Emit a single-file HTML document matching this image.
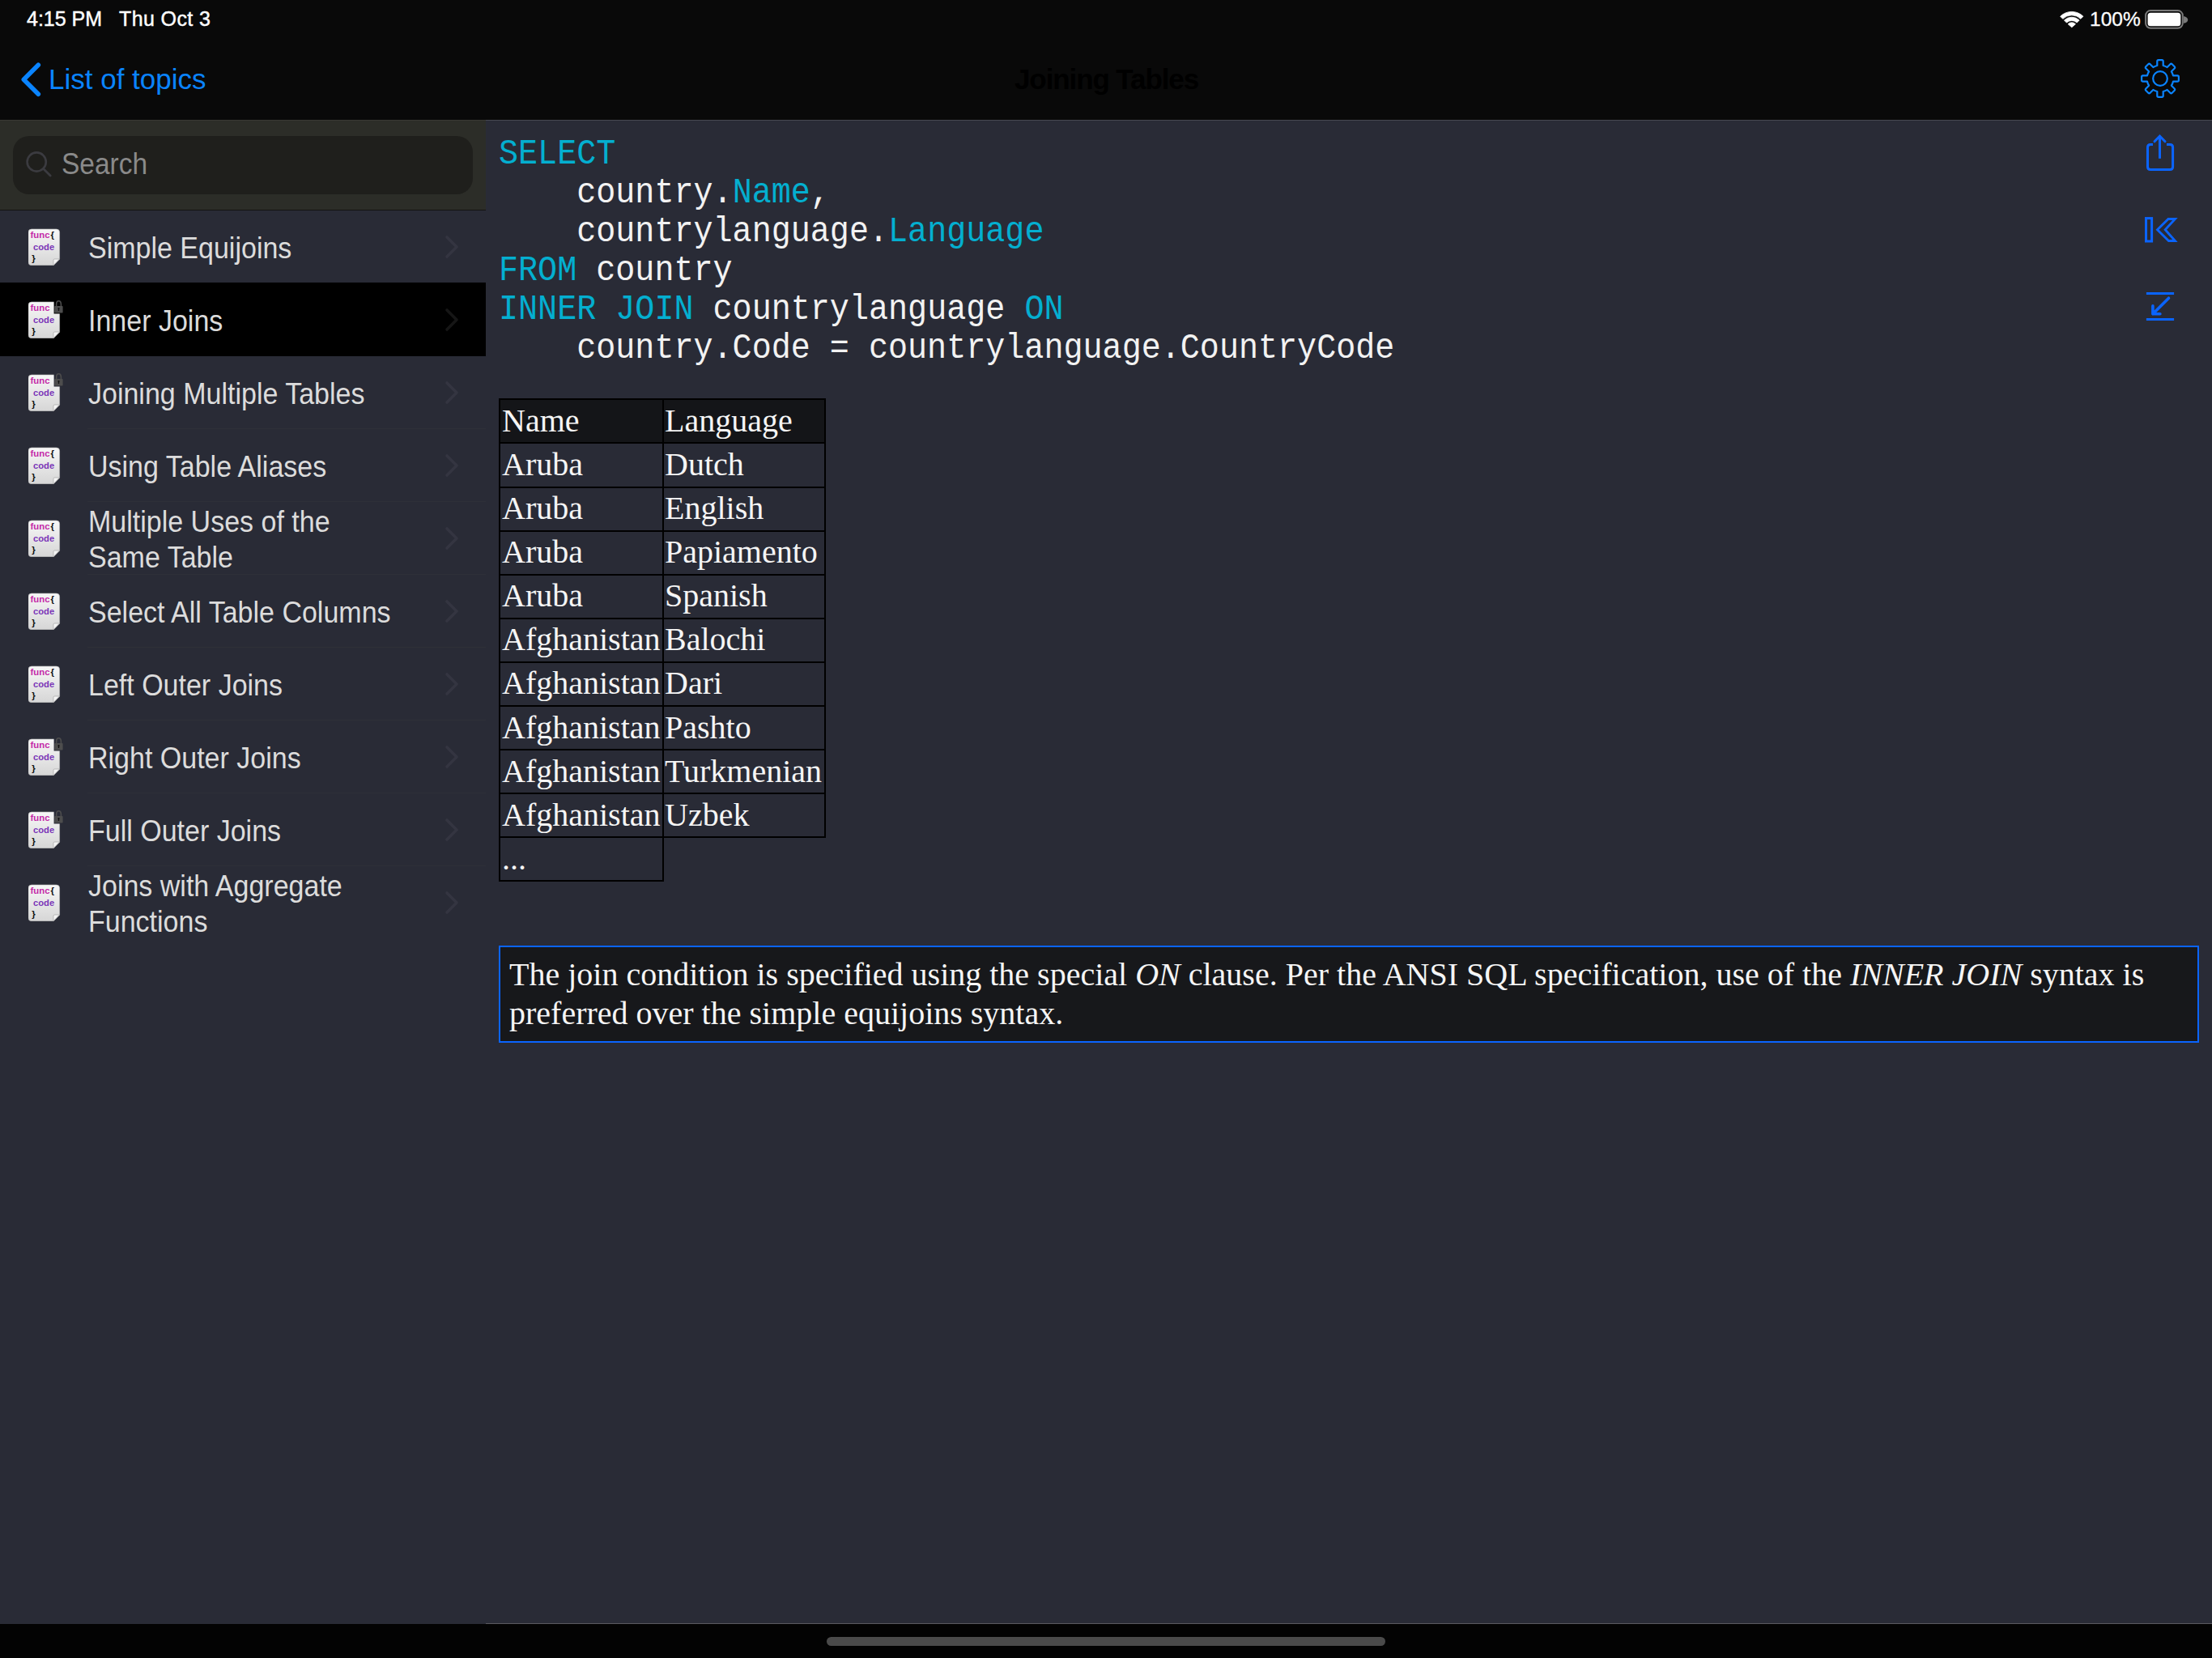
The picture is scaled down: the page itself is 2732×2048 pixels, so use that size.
<!DOCTYPE html>
<html><head><meta charset="utf-8">
<style>
*{margin:0;padding:0;box-sizing:border-box}
html,body{width:2732px;height:2048px;overflow:hidden;background:#292b36}
body{position:relative;font-family:"Liberation Sans",sans-serif}
.a{position:absolute;white-space:pre}
#top{position:absolute;left:0;top:0;width:2732px;height:148px;background:#090909}
#navsep{position:absolute;left:600px;top:148px;width:2132px;height:1px;background:#474852}
#navsep2{position:absolute;left:0;top:148px;width:600px;height:1px;background:#393934;z-index:2}
#searchband{position:absolute;left:0;top:148px;width:600px;height:112px;background:#2c2d28;border-bottom:1px solid #141412}
#field{position:absolute;left:16px;top:168px;width:568px;height:72px;border-radius:20px;background:#1f1f1c}
.sel{position:absolute;left:0;width:600px;background:#000}
.sep{position:absolute;left:108px;width:492px;height:1px;background:#2e3038}
.title{position:absolute;left:109px;font-size:34px;line-height:44.8px;color:#dcdcdc;white-space:pre}
.code{position:absolute;left:616px;font-family:"Liberation Mono",monospace;font-size:40.1px;line-height:48px;color:#f2f2f2;white-space:pre}
.k{color:#04afd0}
#bottom{position:absolute;left:0;top:2006px;width:2732px;height:42px;background:#030303}
#botsep{position:absolute;left:600px;top:2005px;width:2132px;height:1px;background:#5a5a60}
#home{position:absolute;left:1021px;top:2022px;width:690px;height:11px;border-radius:6px;background:#4a4a4a}
.serif{position:absolute;font-family:"Liberation Serif",serif;color:#f5f5f5;font-size:40px;white-space:pre}
.tl{position:absolute;background:#000}
#box{position:absolute;left:616px;top:1168px;width:2100px;height:120px;border:2px solid #0a64ff;background:#17181b}
</style></head><body>
<div id="top"></div>
<div id="navsep"></div>
<div class="a" style="left:33px;top:6px;font-size:25px;line-height:34px;color:#fff;-webkit-text-stroke:0.45px #fff">4:15 PM</div>
<div class="a" style="left:147px;top:6px;font-size:25px;line-height:34px;color:#fff;-webkit-text-stroke:0.45px #fff;letter-spacing:0.4px">Thu Oct 3</div>
<div class="a" style="left:2581px;top:7px;font-size:24.5px;line-height:34px;color:#fff;-webkit-text-stroke:0.3px #fff">100%</div>
<div class="a" style="left:60px;top:80px;font-size:35px;line-height:35px;color:#0a84ff">List of topics</div>
<div class="a" style="left:1253px;top:80px;font-size:35px;line-height:35px;color:#000;font-weight:bold;letter-spacing:-1.1px">Joining Tables</div>
<svg class="a" style="left:0;top:0" width="2732" height="148">
 <path d="M47.3 80.2L29.3 98.2L47.3 116.2" fill="none" stroke="#0a84ff" stroke-width="5.6" stroke-linecap="round" stroke-linejoin="round"/>
 <path d="M2544.66 20.26A20.0 20.0 0 0 1 2572.94 20.26L2569.83 23.37A15.6 15.6 0 0 0 2547.77 23.37Z" fill="#fff" stroke="#fff" stroke-width="0.8" stroke-linejoin="round"/><path d="M2549.47 25.07A13.2 13.2 0 0 1 2568.13 25.07L2565.16 28.04A9.0 9.0 0 0 0 2552.44 28.04Z" fill="#fff" stroke="#fff" stroke-width="0.8" stroke-linejoin="round"/><path d="M2554.13 29.73A6.6 6.6 0 0 1 2563.47 29.73L2558.8 33.8Z" fill="#fff" stroke="#fff" stroke-width="0.8" stroke-linejoin="round"/>
 <rect x="2650.1" y="13.1" width="45.7" height="21.6" rx="6" fill="none" stroke="#7a7a7a" stroke-width="2"/>
 <rect x="2652.6" y="15.8" width="40.7" height="16.5" rx="3.5" fill="#fff"/>
 <path d="M2697 20V28.8Q2702.2 27.5 2702.2 24.4Q2702.2 21.3 2697 20Z" fill="#7a7a7a"/>
 <path d="M2664.30 81.02L2664.30 75.70Q2664.30 74.10 2665.90 74.10L2670.10 74.10Q2671.70 74.10 2671.70 75.70L2671.70 81.02A16.4 16.4 0 0 1 2676.68 83.09L2680.45 79.32Q2681.58 78.19 2682.71 79.32L2685.68 82.29Q2686.81 83.42 2685.68 84.55L2681.91 88.32A16.4 16.4 0 0 1 2683.98 93.30L2689.30 93.30Q2690.90 93.30 2690.90 94.90L2690.90 99.10Q2690.90 100.70 2689.30 100.70L2683.98 100.70A16.4 16.4 0 0 1 2681.91 105.68L2685.68 109.45Q2686.81 110.58 2685.68 111.71L2682.71 114.68Q2681.58 115.81 2680.45 114.68L2676.68 110.91A16.4 16.4 0 0 1 2671.70 112.98L2671.70 118.30Q2671.70 119.90 2670.10 119.90L2665.90 119.90Q2664.30 119.90 2664.30 118.30L2664.30 112.98A16.4 16.4 0 0 1 2659.32 110.91L2655.55 114.68Q2654.42 115.81 2653.29 114.68L2650.32 111.71Q2649.19 110.58 2650.32 109.45L2654.09 105.68A16.4 16.4 0 0 1 2652.02 100.70L2646.70 100.70Q2645.10 100.70 2645.10 99.10L2645.10 94.90Q2645.10 93.30 2646.70 93.30L2652.02 93.30A16.4 16.4 0 0 1 2654.09 88.32L2650.32 84.55Q2649.19 83.42 2650.32 82.29L2653.29 79.32Q2654.42 78.19 2655.55 79.32L2659.32 83.09A16.4 16.4 0 0 1 2664.30 81.02Z" fill="none" stroke="#0a84ff" stroke-width="2.2" stroke-linejoin="round"/><circle cx="2668" cy="97" r="8.85" fill="none" stroke="#0a84ff" stroke-width="2.2"/>
</svg>
<div id="searchband"></div><div id="navsep2"></div>
<div id="field"></div>
<svg class="a" style="left:0;top:150px" width="100" height="100">
 <circle cx="45.2" cy="50" r="11.6" fill="none" stroke="#3b3b40" stroke-width="2.6"/>
 <path d="M53.6 58.4L62.2 67" stroke="#3b3b40" stroke-width="2.8" stroke-linecap="round"/>
</svg>
<div class="a" style="left:76px;top:187.3px;font-size:33.5px;line-height:34px;color:#8a8a8a;transform:scaleY(1.08);transform-origin:0 28.6px">Search</div>
<div class="title" style="top:284.90px;transform:scaleY(1.06);transform-origin:0 33.7px">Simple Equijoins</div><svg class="a" style="left:35.20px;top:280.20px" width="46" height="48" viewBox="0 -3 46 48"><defs><linearGradient id="g" x1="0" y1="0" x2="0" y2="1"><stop offset="0" stop-color="#f7f7f7"/><stop offset="1" stop-color="#d6d6d6"/></linearGradient></defs><path d="M4 0H34.6Q38.6 0 38.6 4V37L31 44.7H4Q0 44.7 0 40.7V4Q0 0 4 0Z" fill="url(#g)" stroke="#b8b8b8" stroke-width="0.6"/><path d="M38.6 37L31 44.7V38.5Q31 37 32.5 37Z" fill="#f4f4f4" stroke="#9a9a9a" stroke-width="0.6"/><text x="2.6" y="10.7" font-family="Liberation Sans" font-weight="bold" font-size="11.3" fill="#c42aa8">func</text><text x="27.6" y="11.2" font-family="Liberation Sans" font-weight="bold" font-size="11.5" fill="#111">{</text><text x="6" y="25.5" font-family="Liberation Sans" font-weight="bold" font-size="11.2" fill="#7b36b8">code</text><text x="4.2" y="40.4" font-family="Liberation Sans" font-weight="bold" font-size="11.5" fill="#111">}</text></svg><svg class="a" style="left:545px;top:288.50px" width="26" height="32"><path d="M7 4L19 16L7 28" fill="none" stroke="#343541" stroke-width="3.6" stroke-linecap="round" stroke-linejoin="round"/></svg><div class="sel" style="top:349.00px;height:91px"></div><div class="title" style="top:374.90px;transform:scaleY(1.06);transform-origin:0 33.7px">Inner Joins</div><svg class="a" style="left:35.20px;top:370.20px" width="46" height="48" viewBox="0 -3 46 48"><defs><linearGradient id="g" x1="0" y1="0" x2="0" y2="1"><stop offset="0" stop-color="#f7f7f7"/><stop offset="1" stop-color="#d6d6d6"/></linearGradient></defs><path d="M4 0H34.6Q38.6 0 38.6 4V37L31 44.7H4Q0 44.7 0 40.7V4Q0 0 4 0Z" fill="url(#g)" stroke="#b8b8b8" stroke-width="0.6"/><path d="M38.6 37L31 44.7V38.5Q31 37 32.5 37Z" fill="#f4f4f4" stroke="#9a9a9a" stroke-width="0.6"/><rect x="31.6" y="-3" width="14.4" height="17.5" fill="#000"/><path d="M34.6 5.5V3.2Q34.6 -1.2 37.5 -1.2Q40.4 -1.2 40.4 3.2V5.5" fill="none" stroke="#4d4d4d" stroke-width="1.6"/><rect x="32.3" y="5" width="10.3" height="8.5" rx="0.8" fill="#4d4d4d"/><path d="M37.5 7.6V11" stroke="#111" stroke-width="1.3"/><circle cx="37.5" cy="8" r="1" fill="#111"/><text x="2.6" y="10.7" font-family="Liberation Sans" font-weight="bold" font-size="11.3" fill="#c42aa8">func</text><text x="6" y="25.5" font-family="Liberation Sans" font-weight="bold" font-size="11.2" fill="#7b36b8">code</text><text x="4.2" y="40.4" font-family="Liberation Sans" font-weight="bold" font-size="11.5" fill="#111">}</text></svg><svg class="a" style="left:545px;top:378.50px" width="26" height="32"><path d="M7 4L19 16L7 28" fill="none" stroke="#161616" stroke-width="3.6" stroke-linecap="round" stroke-linejoin="round"/></svg><div class="title" style="top:464.90px;transform:scaleY(1.06);transform-origin:0 33.7px">Joining Multiple Tables</div><svg class="a" style="left:35.20px;top:460.20px" width="46" height="48" viewBox="0 -3 46 48"><defs><linearGradient id="g" x1="0" y1="0" x2="0" y2="1"><stop offset="0" stop-color="#f7f7f7"/><stop offset="1" stop-color="#d6d6d6"/></linearGradient></defs><path d="M4 0H34.6Q38.6 0 38.6 4V37L31 44.7H4Q0 44.7 0 40.7V4Q0 0 4 0Z" fill="url(#g)" stroke="#b8b8b8" stroke-width="0.6"/><path d="M38.6 37L31 44.7V38.5Q31 37 32.5 37Z" fill="#f4f4f4" stroke="#9a9a9a" stroke-width="0.6"/><rect x="31.6" y="-3" width="14.4" height="17.5" fill="#292b36"/><path d="M34.6 5.5V3.2Q34.6 -1.2 37.5 -1.2Q40.4 -1.2 40.4 3.2V5.5" fill="none" stroke="#4d4d4d" stroke-width="1.6"/><rect x="32.3" y="5" width="10.3" height="8.5" rx="0.8" fill="#4d4d4d"/><path d="M37.5 7.6V11" stroke="#111" stroke-width="1.3"/><circle cx="37.5" cy="8" r="1" fill="#111"/><text x="2.6" y="10.7" font-family="Liberation Sans" font-weight="bold" font-size="11.3" fill="#c42aa8">func</text><text x="6" y="25.5" font-family="Liberation Sans" font-weight="bold" font-size="11.2" fill="#7b36b8">code</text><text x="4.2" y="40.4" font-family="Liberation Sans" font-weight="bold" font-size="11.5" fill="#111">}</text></svg><svg class="a" style="left:545px;top:468.50px" width="26" height="32"><path d="M7 4L19 16L7 28" fill="none" stroke="#343541" stroke-width="3.6" stroke-linecap="round" stroke-linejoin="round"/></svg><div class="sep" style="top:529.00px"></div><div class="title" style="top:554.90px;transform:scaleY(1.06);transform-origin:0 33.7px">Using Table Aliases</div><svg class="a" style="left:35.20px;top:550.20px" width="46" height="48" viewBox="0 -3 46 48"><defs><linearGradient id="g" x1="0" y1="0" x2="0" y2="1"><stop offset="0" stop-color="#f7f7f7"/><stop offset="1" stop-color="#d6d6d6"/></linearGradient></defs><path d="M4 0H34.6Q38.6 0 38.6 4V37L31 44.7H4Q0 44.7 0 40.7V4Q0 0 4 0Z" fill="url(#g)" stroke="#b8b8b8" stroke-width="0.6"/><path d="M38.6 37L31 44.7V38.5Q31 37 32.5 37Z" fill="#f4f4f4" stroke="#9a9a9a" stroke-width="0.6"/><text x="2.6" y="10.7" font-family="Liberation Sans" font-weight="bold" font-size="11.3" fill="#c42aa8">func</text><text x="27.6" y="11.2" font-family="Liberation Sans" font-weight="bold" font-size="11.5" fill="#111">{</text><text x="6" y="25.5" font-family="Liberation Sans" font-weight="bold" font-size="11.2" fill="#7b36b8">code</text><text x="4.2" y="40.4" font-family="Liberation Sans" font-weight="bold" font-size="11.5" fill="#111">}</text></svg><svg class="a" style="left:545px;top:558.50px" width="26" height="32"><path d="M7 4L19 16L7 28" fill="none" stroke="#343541" stroke-width="3.6" stroke-linecap="round" stroke-linejoin="round"/></svg><div class="sep" style="top:619.00px"></div><div class="title" style="top:622.60px;transform:scaleY(1.06);transform-origin:0 33.7px">Multiple Uses of the</div><div class="title" style="top:666.80px;transform:scaleY(1.06);transform-origin:0 33.7px">Same Table</div><svg class="a" style="left:35.20px;top:640.20px" width="46" height="48" viewBox="0 -3 46 48"><defs><linearGradient id="g" x1="0" y1="0" x2="0" y2="1"><stop offset="0" stop-color="#f7f7f7"/><stop offset="1" stop-color="#d6d6d6"/></linearGradient></defs><path d="M4 0H34.6Q38.6 0 38.6 4V37L31 44.7H4Q0 44.7 0 40.7V4Q0 0 4 0Z" fill="url(#g)" stroke="#b8b8b8" stroke-width="0.6"/><path d="M38.6 37L31 44.7V38.5Q31 37 32.5 37Z" fill="#f4f4f4" stroke="#9a9a9a" stroke-width="0.6"/><text x="2.6" y="10.7" font-family="Liberation Sans" font-weight="bold" font-size="11.3" fill="#c42aa8">func</text><text x="27.6" y="11.2" font-family="Liberation Sans" font-weight="bold" font-size="11.5" fill="#111">{</text><text x="6" y="25.5" font-family="Liberation Sans" font-weight="bold" font-size="11.2" fill="#7b36b8">code</text><text x="4.2" y="40.4" font-family="Liberation Sans" font-weight="bold" font-size="11.5" fill="#111">}</text></svg><svg class="a" style="left:545px;top:648.50px" width="26" height="32"><path d="M7 4L19 16L7 28" fill="none" stroke="#343541" stroke-width="3.6" stroke-linecap="round" stroke-linejoin="round"/></svg><div class="sep" style="top:709.00px"></div><div class="title" style="top:734.90px;transform:scaleY(1.06);transform-origin:0 33.7px">Select All Table Columns</div><svg class="a" style="left:35.20px;top:730.20px" width="46" height="48" viewBox="0 -3 46 48"><defs><linearGradient id="g" x1="0" y1="0" x2="0" y2="1"><stop offset="0" stop-color="#f7f7f7"/><stop offset="1" stop-color="#d6d6d6"/></linearGradient></defs><path d="M4 0H34.6Q38.6 0 38.6 4V37L31 44.7H4Q0 44.7 0 40.7V4Q0 0 4 0Z" fill="url(#g)" stroke="#b8b8b8" stroke-width="0.6"/><path d="M38.6 37L31 44.7V38.5Q31 37 32.5 37Z" fill="#f4f4f4" stroke="#9a9a9a" stroke-width="0.6"/><text x="2.6" y="10.7" font-family="Liberation Sans" font-weight="bold" font-size="11.3" fill="#c42aa8">func</text><text x="27.6" y="11.2" font-family="Liberation Sans" font-weight="bold" font-size="11.5" fill="#111">{</text><text x="6" y="25.5" font-family="Liberation Sans" font-weight="bold" font-size="11.2" fill="#7b36b8">code</text><text x="4.2" y="40.4" font-family="Liberation Sans" font-weight="bold" font-size="11.5" fill="#111">}</text></svg><svg class="a" style="left:545px;top:738.50px" width="26" height="32"><path d="M7 4L19 16L7 28" fill="none" stroke="#343541" stroke-width="3.6" stroke-linecap="round" stroke-linejoin="round"/></svg><div class="sep" style="top:799.00px"></div><div class="title" style="top:824.90px;transform:scaleY(1.06);transform-origin:0 33.7px">Left Outer Joins</div><svg class="a" style="left:35.20px;top:820.20px" width="46" height="48" viewBox="0 -3 46 48"><defs><linearGradient id="g" x1="0" y1="0" x2="0" y2="1"><stop offset="0" stop-color="#f7f7f7"/><stop offset="1" stop-color="#d6d6d6"/></linearGradient></defs><path d="M4 0H34.6Q38.6 0 38.6 4V37L31 44.7H4Q0 44.7 0 40.7V4Q0 0 4 0Z" fill="url(#g)" stroke="#b8b8b8" stroke-width="0.6"/><path d="M38.6 37L31 44.7V38.5Q31 37 32.5 37Z" fill="#f4f4f4" stroke="#9a9a9a" stroke-width="0.6"/><text x="2.6" y="10.7" font-family="Liberation Sans" font-weight="bold" font-size="11.3" fill="#c42aa8">func</text><text x="27.6" y="11.2" font-family="Liberation Sans" font-weight="bold" font-size="11.5" fill="#111">{</text><text x="6" y="25.5" font-family="Liberation Sans" font-weight="bold" font-size="11.2" fill="#7b36b8">code</text><text x="4.2" y="40.4" font-family="Liberation Sans" font-weight="bold" font-size="11.5" fill="#111">}</text></svg><svg class="a" style="left:545px;top:828.50px" width="26" height="32"><path d="M7 4L19 16L7 28" fill="none" stroke="#343541" stroke-width="3.6" stroke-linecap="round" stroke-linejoin="round"/></svg><div class="sep" style="top:889.00px"></div><div class="title" style="top:914.90px;transform:scaleY(1.06);transform-origin:0 33.7px">Right Outer Joins</div><svg class="a" style="left:35.20px;top:910.20px" width="46" height="48" viewBox="0 -3 46 48"><defs><linearGradient id="g" x1="0" y1="0" x2="0" y2="1"><stop offset="0" stop-color="#f7f7f7"/><stop offset="1" stop-color="#d6d6d6"/></linearGradient></defs><path d="M4 0H34.6Q38.6 0 38.6 4V37L31 44.7H4Q0 44.7 0 40.7V4Q0 0 4 0Z" fill="url(#g)" stroke="#b8b8b8" stroke-width="0.6"/><path d="M38.6 37L31 44.7V38.5Q31 37 32.5 37Z" fill="#f4f4f4" stroke="#9a9a9a" stroke-width="0.6"/><rect x="31.6" y="-3" width="14.4" height="17.5" fill="#292b36"/><path d="M34.6 5.5V3.2Q34.6 -1.2 37.5 -1.2Q40.4 -1.2 40.4 3.2V5.5" fill="none" stroke="#4d4d4d" stroke-width="1.6"/><rect x="32.3" y="5" width="10.3" height="8.5" rx="0.8" fill="#4d4d4d"/><path d="M37.5 7.6V11" stroke="#111" stroke-width="1.3"/><circle cx="37.5" cy="8" r="1" fill="#111"/><text x="2.6" y="10.7" font-family="Liberation Sans" font-weight="bold" font-size="11.3" fill="#c42aa8">func</text><text x="6" y="25.5" font-family="Liberation Sans" font-weight="bold" font-size="11.2" fill="#7b36b8">code</text><text x="4.2" y="40.4" font-family="Liberation Sans" font-weight="bold" font-size="11.5" fill="#111">}</text></svg><svg class="a" style="left:545px;top:918.50px" width="26" height="32"><path d="M7 4L19 16L7 28" fill="none" stroke="#343541" stroke-width="3.6" stroke-linecap="round" stroke-linejoin="round"/></svg><div class="sep" style="top:979.00px"></div><div class="title" style="top:1004.90px;transform:scaleY(1.06);transform-origin:0 33.7px">Full Outer Joins</div><svg class="a" style="left:35.20px;top:1000.20px" width="46" height="48" viewBox="0 -3 46 48"><defs><linearGradient id="g" x1="0" y1="0" x2="0" y2="1"><stop offset="0" stop-color="#f7f7f7"/><stop offset="1" stop-color="#d6d6d6"/></linearGradient></defs><path d="M4 0H34.6Q38.6 0 38.6 4V37L31 44.7H4Q0 44.7 0 40.7V4Q0 0 4 0Z" fill="url(#g)" stroke="#b8b8b8" stroke-width="0.6"/><path d="M38.6 37L31 44.7V38.5Q31 37 32.5 37Z" fill="#f4f4f4" stroke="#9a9a9a" stroke-width="0.6"/><rect x="31.6" y="-3" width="14.4" height="17.5" fill="#292b36"/><path d="M34.6 5.5V3.2Q34.6 -1.2 37.5 -1.2Q40.4 -1.2 40.4 3.2V5.5" fill="none" stroke="#4d4d4d" stroke-width="1.6"/><rect x="32.3" y="5" width="10.3" height="8.5" rx="0.8" fill="#4d4d4d"/><path d="M37.5 7.6V11" stroke="#111" stroke-width="1.3"/><circle cx="37.5" cy="8" r="1" fill="#111"/><text x="2.6" y="10.7" font-family="Liberation Sans" font-weight="bold" font-size="11.3" fill="#c42aa8">func</text><text x="6" y="25.5" font-family="Liberation Sans" font-weight="bold" font-size="11.2" fill="#7b36b8">code</text><text x="4.2" y="40.4" font-family="Liberation Sans" font-weight="bold" font-size="11.5" fill="#111">}</text></svg><svg class="a" style="left:545px;top:1008.50px" width="26" height="32"><path d="M7 4L19 16L7 28" fill="none" stroke="#343541" stroke-width="3.6" stroke-linecap="round" stroke-linejoin="round"/></svg><div class="sep" style="top:1069.00px"></div><div class="title" style="top:1072.60px;transform:scaleY(1.06);transform-origin:0 33.7px">Joins with Aggregate</div><div class="title" style="top:1116.80px;transform:scaleY(1.06);transform-origin:0 33.7px">Functions</div><svg class="a" style="left:35.20px;top:1090.20px" width="46" height="48" viewBox="0 -3 46 48"><defs><linearGradient id="g" x1="0" y1="0" x2="0" y2="1"><stop offset="0" stop-color="#f7f7f7"/><stop offset="1" stop-color="#d6d6d6"/></linearGradient></defs><path d="M4 0H34.6Q38.6 0 38.6 4V37L31 44.7H4Q0 44.7 0 40.7V4Q0 0 4 0Z" fill="url(#g)" stroke="#b8b8b8" stroke-width="0.6"/><path d="M38.6 37L31 44.7V38.5Q31 37 32.5 37Z" fill="#f4f4f4" stroke="#9a9a9a" stroke-width="0.6"/><text x="2.6" y="10.7" font-family="Liberation Sans" font-weight="bold" font-size="11.3" fill="#c42aa8">func</text><text x="27.6" y="11.2" font-family="Liberation Sans" font-weight="bold" font-size="11.5" fill="#111">{</text><text x="6" y="25.5" font-family="Liberation Sans" font-weight="bold" font-size="11.2" fill="#7b36b8">code</text><text x="4.2" y="40.4" font-family="Liberation Sans" font-weight="bold" font-size="11.5" fill="#111">}</text></svg><svg class="a" style="left:545px;top:1098.50px" width="26" height="32"><path d="M7 4L19 16L7 28" fill="none" stroke="#343541" stroke-width="3.6" stroke-linecap="round" stroke-linejoin="round"/></svg><div class="code" style="top:168px;transform:scaleY(1.1);transform-origin:0 34.7px"><span class="k">SELECT</span></div><div class="code" style="top:216px;transform:scaleY(1.1);transform-origin:0 34.7px">    country.<span class="k">Name</span>,</div><div class="code" style="top:264px;transform:scaleY(1.1);transform-origin:0 34.7px">    countrylanguage.<span class="k">Language</span></div><div class="code" style="top:312px;transform:scaleY(1.1);transform-origin:0 34.7px"><span class="k">FROM</span> country</div><div class="code" style="top:360px;transform:scaleY(1.1);transform-origin:0 34.7px"><span class="k">INNER JOIN</span> countrylanguage <span class="k">ON</span></div><div class="code" style="top:408px;transform:scaleY(1.1);transform-origin:0 34.7px">    country.Code = countrylanguage.CountryCode</div><svg class="a" style="left:2600px;top:150px" width="132" height="260">
 <g fill="none" stroke="#0a64ff" stroke-width="3">
  <path d="M59 28.5H56Q52.5 28.5 52.5 32V56Q52.5 59.5 56 59.5H80.1Q83.6 59.5 83.6 56V32Q83.6 28.5 80.1 28.5H76" />
  <path d="M67.5 18.5V45.8" stroke-width="3"/>
  <path d="M61 24.8L67.5 18.2L74 24.8" stroke-linecap="round"/>
  <rect x="50.5" y="119.6" width="7.1" height="28.4" stroke-width="3"/>
  <path d="M78 120.5H86.5L74.2 133.8L86.5 147.5H78.5L64.5 133.8Z" stroke-width="2.8"/>
  <path d="M50.9 212.5H85.1M50.9 244.5H85.1" stroke-width="3"/>
  <path d="M78.5 218.2L58.9 237.8M58.9 227.9V237.8H67.9" stroke-width="3.6" stroke-linecap="round" stroke-linejoin="round"/>
 </g>
</svg><div class="a" style="left:616px;top:492.3px;width:404px;height:54.1px;background:#141518"></div><div class="tl" style="left:616px;top:492.3px;width:404px;height:2px"></div><div class="tl" style="left:616px;top:546.4px;width:404px;height:2px"></div><div class="tl" style="left:616px;top:600.5px;width:404px;height:2px"></div><div class="tl" style="left:616px;top:654.6px;width:404px;height:2px"></div><div class="tl" style="left:616px;top:708.7px;width:404px;height:2px"></div><div class="tl" style="left:616px;top:762.8px;width:404px;height:2px"></div><div class="tl" style="left:616px;top:816.9px;width:404px;height:2px"></div><div class="tl" style="left:616px;top:871.0px;width:404px;height:2px"></div><div class="tl" style="left:616px;top:925.1px;width:404px;height:2px"></div><div class="tl" style="left:616px;top:979.2px;width:404px;height:2px"></div><div class="tl" style="left:616px;top:1033.3px;width:404px;height:2px"></div><div class="tl" style="left:616px;top:1087.4px;width:204px;height:2px"></div><div class="tl" style="left:616px;top:492.3px;width:2px;height:597.1px"></div><div class="tl" style="left:818px;top:492.3px;width:2px;height:597.1px"></div><div class="tl" style="left:1018px;top:492.3px;width:2px;height:543.0px"></div><div class="serif" style="left:620px;top:492.8px;line-height:54px">Name</div><div class="serif" style="left:821px;top:492.8px;line-height:54px">Language</div><div class="serif" style="left:620px;top:546.9px;line-height:54px">Aruba</div><div class="serif" style="left:821px;top:546.9px;line-height:54px">Dutch</div><div class="serif" style="left:620px;top:601.0px;line-height:54px">Aruba</div><div class="serif" style="left:821px;top:601.0px;line-height:54px">English</div><div class="serif" style="left:620px;top:655.1px;line-height:54px">Aruba</div><div class="serif" style="left:821px;top:655.1px;line-height:54px">Papiamento</div><div class="serif" style="left:620px;top:709.2px;line-height:54px">Aruba</div><div class="serif" style="left:821px;top:709.2px;line-height:54px">Spanish</div><div class="serif" style="left:620px;top:763.3px;line-height:54px">Afghanistan</div><div class="serif" style="left:821px;top:763.3px;line-height:54px">Balochi</div><div class="serif" style="left:620px;top:817.4px;line-height:54px">Afghanistan</div><div class="serif" style="left:821px;top:817.4px;line-height:54px">Dari</div><div class="serif" style="left:620px;top:871.5px;line-height:54px">Afghanistan</div><div class="serif" style="left:821px;top:871.5px;line-height:54px">Pashto</div><div class="serif" style="left:620px;top:925.6px;line-height:54px">Afghanistan</div><div class="serif" style="left:821px;top:925.6px;line-height:54px">Turkmenian</div><div class="serif" style="left:620px;top:979.7px;line-height:54px">Afghanistan</div><div class="serif" style="left:821px;top:979.7px;line-height:54px">Uzbek</div><div class="serif" style="left:620px;top:1033.8px;line-height:54px">...</div><div id="box"></div><div class="serif" style="left:629px;top:1179.5px;line-height:48px">The join condition is specified using the special <i>ON</i> clause. Per the ANSI SQL specification, use of the <i>INNER JOIN</i> syntax is
preferred over the simple equijoins syntax.</div>
<div id="bottom"></div>
<div id="botsep"></div>
<div id="home"></div>
</body></html>
